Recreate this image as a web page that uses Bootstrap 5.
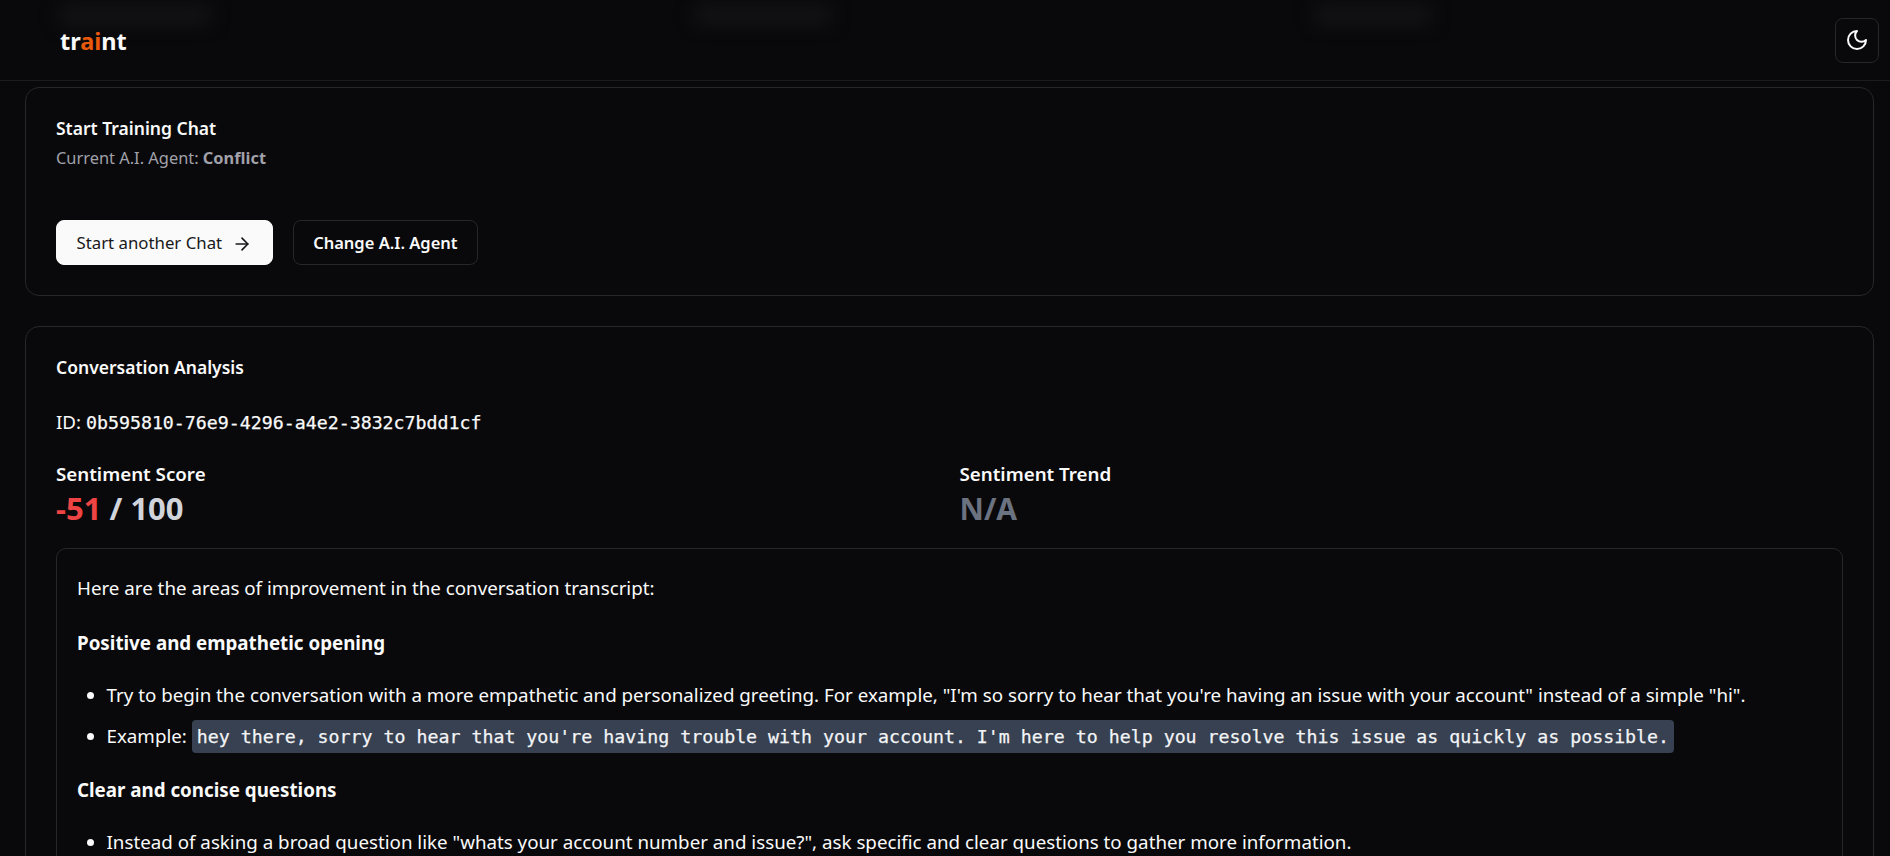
<!DOCTYPE html>
<html lang="en">
<head>
    <meta charset="UTF-8">
    <meta name="viewport" content="width=device-width, initial-scale=1.0">
    <title>Traint - Training Chat</title>
    <link href="https://cdn.jsdelivr.net/npm/bootstrap@5.3.3/dist/css/bootstrap.min.css" rel="stylesheet">
    <script src="https://cdn.jsdelivr.net/npm/bootstrap@5.3.3/dist/js/bootstrap.bundle.min.js"></script>
    <style>
        html, body {
            height: 856px;
            overflow: hidden;
        }

        body {
            font-family: "Noto Sans", sans-serif;
            font-size: 18.75px;
            line-height: 28px;
            background-color: #09090b;
            color: #fafafa;
        }

        .top-bar {
            height: 81px;
            padding: 0 11px 0 60px;
            border-bottom: 1px solid #1c1c1f;
            overflow: hidden;
        }

        .smudge {
            position: absolute;
            top: 6px;
            height: 18px;
            background: #141417;
            filter: blur(9px);
        }

        .smudge-a { left: 60px; width: 150px; }
        .smudge-b { left: 695px; width: 135px; }
        .smudge-c { left: 1315px; width: 115px; }

        .brand-mark {
            position: relative;
            margin-top: 2px;
            font-size: 23.5px;
            font-weight: 700;
            color: #fafafa;
            text-decoration: none;
        }

        .brand-mark span { color: #ea580c; }

        .theme-btn {
            width: 44px;
            height: 45px;
            padding: 0;
            background: #09090b;
            border: 1px solid #27272a;
            border-radius: 8px;
            color: #fafafa;
        }

        .page-body { padding: 6px 16px 0 25px; }

        .panel {
            background: #09090b;
            border: 1px solid #27272a;
            border-radius: 14px;
            color: #fafafa;
        }

        .start-panel { height: 209px; padding: 26px 30px 0; margin-bottom: 30px; }
        .analysis-panel { padding: 26px 30px 0; }

        .panel-title { font-size: 17.5px; font-weight: 600; }
        .agent-line { font-size: 16.4px; color: #a1a1aa; margin-top: 2px; }
        .agent-line strong { font-weight: 700; }

        .action-row { margin-top: 48px; gap: 20px; }

        .btn-start, .btn-change {
            height: 45px;
            padding: 2px 19.5px 0;
            font-size: 16.8px;
            line-height: 1;
            border-radius: 8px;
        }

        .btn-start {
            gap: 10px;
            background: #fafafa;
            border: 1px solid #fafafa;
            color: #18181b;
        }

        .btn-change {
            background: #09090b;
            border: 1px solid #27272a;
            color: #fafafa;
            font-size: 16.5px;
            font-weight: 600;
        }

        .mono-text {
            font-family: "DejaVu Sans Mono", monospace;
            font-size: 18.25px;
            -webkit-text-stroke: 0.25px currentColor;
        }

        .id-line { margin-top: 27px; }
        .id-line code { color: #fafafa; }

        .score-grid {
            grid-template-columns: 1fr 1fr;
            column-gap: 20px;
            margin-top: 23px;
        }

        .score-label { font-weight: 600; }
        .score-value {
            font-size: 30px;
            line-height: 41px;
            font-weight: 700;
            color: #d1d5db;
        }
        .score-wide { font-size: 31px; }
        .score-low { color: #ef4444; }
        .score-none { color: #6b7280; }

        .report-box {
            margin-top: 19px;
            padding: 25px 20px 0;
            border: 1px solid #27272a;
            border-radius: 10px;
        }

        .report-box p { margin-bottom: 27px; }
        .report-box .section-head { margin-bottom: 24px; }
        .report-box ul { margin-bottom: 25px; padding-left: 29.5px; }
        .report-box li { margin-bottom: 13px; }

        .quote-code {
            padding: 6px 5px;
            border-radius: 4px;
            background: #374151;
            color: #f3f4f6;
        }
    </style>
</head>
<body>

<header class="top-bar d-flex align-items-center justify-content-between position-relative">
    <div class="smudge smudge-a"></div>
    <div class="smudge smudge-b"></div>
    <div class="smudge smudge-c"></div>
    <a class="brand-mark" href="#">tr<span>ai</span>nt</a>
    <button class="theme-btn btn d-flex align-items-center justify-content-center position-relative" type="button" aria-label="Toggle theme">
        <svg width="24" height="24" viewBox="0 0 24 24" fill="none" stroke="currentColor" stroke-width="2" stroke-linecap="round" stroke-linejoin="round"><path d="M12 3a6 6 0 0 0 9 9 9 9 0 1 1-9-9Z"/></svg>
    </button>
</header>

<main class="page-body">
    <section class="panel start-panel">
        <div class="panel-title">Start Training Chat</div>
        <div class="agent-line">Current A.I. Agent: <strong>Conflict</strong></div>
        <div class="action-row d-flex">
            <button class="btn btn-start d-flex align-items-center" type="button">
                Start another Chat
                <svg width="20" height="20" viewBox="0 0 24 24" fill="none" stroke="currentColor" stroke-width="2" stroke-linecap="round" stroke-linejoin="round"><path d="M5 12h14"/><path d="m12 5 7 7-7 7"/></svg>
            </button>
            <button class="btn btn-change" type="button">Change A.I. Agent</button>
        </div>
    </section>

    <section class="panel analysis-panel">
        <div class="panel-title">Conversation Analysis</div>
        <div class="id-line">ID: <code class="mono-text">0b595810-76e9-4296-a4e2-3832c7bdd1cf</code></div>
        <div class="score-grid d-grid">
            <div>
                <div class="score-label">Sentiment Score</div>
                <div class="score-value score-wide"><span class="score-low">-51</span> / 100</div>
            </div>
            <div>
                <div class="score-label">Sentiment Trend</div>
                <div class="score-value score-none">N/A</div>
            </div>
        </div>
        <div class="report-box">
            <p>Here are the areas of improvement in the conversation transcript:</p>
            <p class="section-head"><strong>Positive and empathetic opening</strong></p>
            <ul>
                <li>Try to begin the conversation with a more empathetic and personalized greeting. For example, "I'm so sorry to hear that you're having an issue with your account" instead of a simple "hi".</li>
                <li>Example: <code class="mono-text quote-code">hey there, sorry to hear that you're having trouble with your account. I'm here to help you resolve this issue as quickly as possible.</code></li>
            </ul>
            <p class="section-head"><strong>Clear and concise questions</strong></p>
            <ul>
                <li>Instead of asking a broad question like "whats your account number and issue?", ask specific and clear questions to gather more information.</li>
            </ul>
        </div>
    </section>
</main>

</body>
</html>
